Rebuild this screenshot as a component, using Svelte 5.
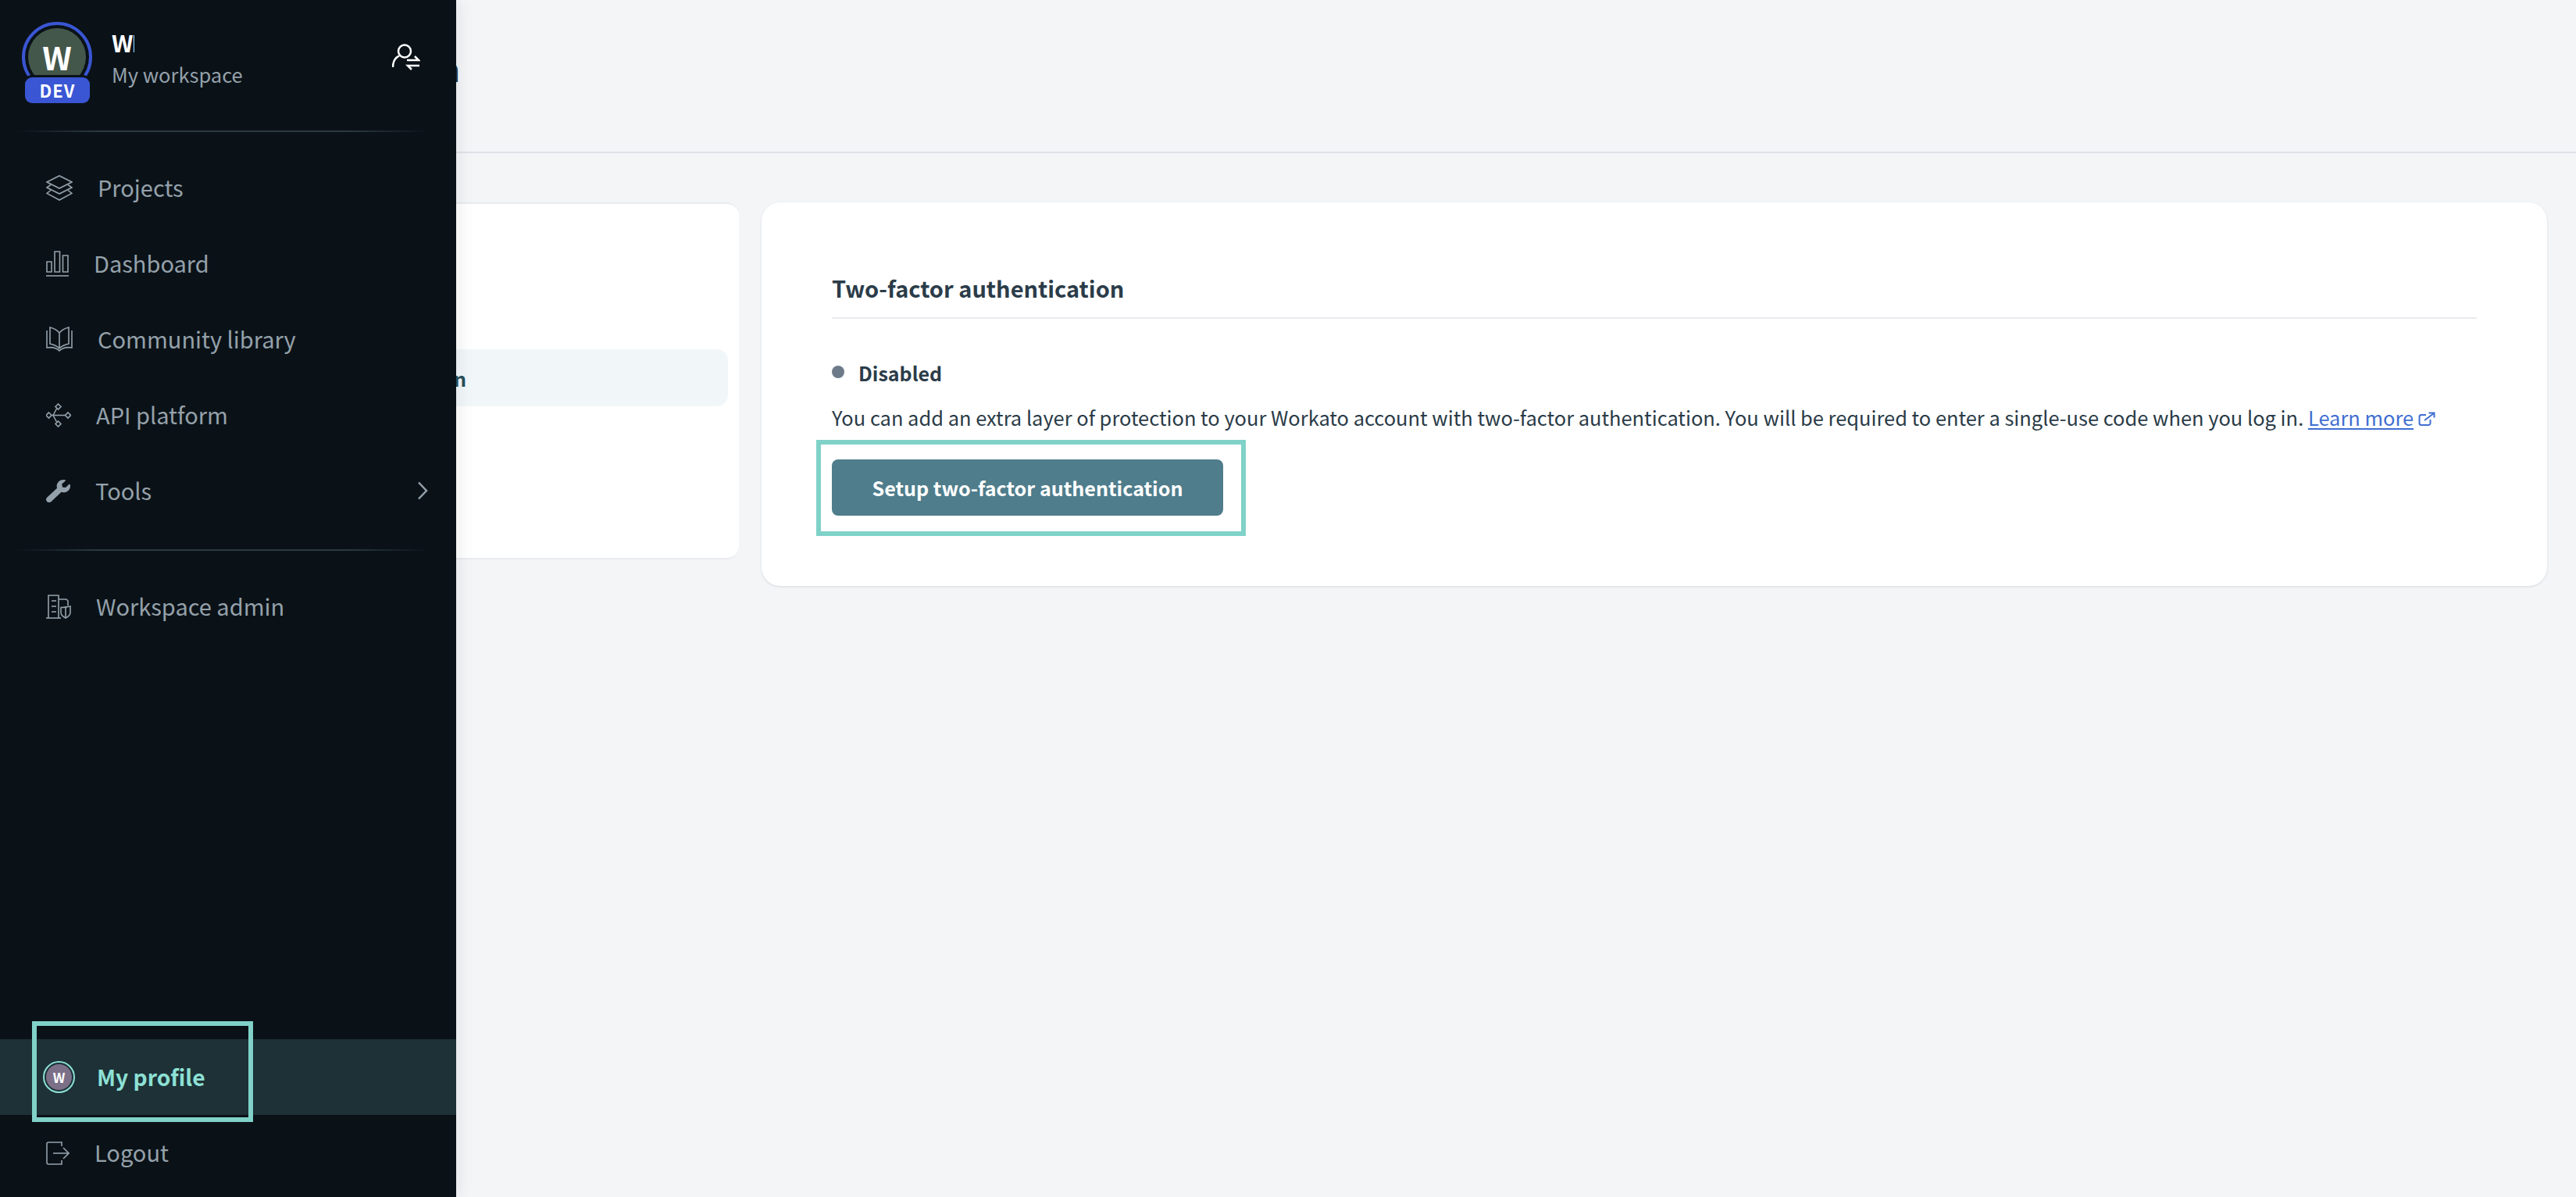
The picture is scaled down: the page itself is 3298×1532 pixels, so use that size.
<script>
  const icons = {
    projects: { w: 34, h: 33, paths: ['M1 9 17 1l16 8-16 8z', 'M6 12.5 1 16l16 8 16-8-5-3.500', 'M6 19.500 1 23.500l16 8.500 16-8.500-5-4'] },
    dashboard: { w: 29, h: 33, paths: ['M1 14h6v13H1z', 'M11 1h6.500v26H11z', 'M21.500 6H28v21h-6.500z', 'M0 32h29'] },
    library: { w: 34, h: 32, paths: ['M1 5v22c6-1 12 0 16 4 4-4 10-5 16-4V5', 'M17 8C14 4.500 9 2 5 1v21c5 1 9 3 12 6 3-3 7-5 12-6V1C25 2 20 4.500 17 8v20'] },
    api: { w: 32, h: 31, paths: ['M3.500 12 7 15.500 3.500 19 0 15.500z', 'M28 12l3.500 3.500L28 19l-3.500-3.500z', 'M15.500 1 19 4.500 15.500 8 12 4.500z', 'M15.500 23 19 26.500 15.500 30 12 26.500z', 'M7 15.500h17.500', 'M9 15.500 13.500 7', 'M9 15.500 13.500 24'] },
    tools: { w: 31, h: 29, fill: true, view: '0 0 512 512', paths: ['M507.730 109.100c-2.240-9.030-13.540-12.090-20.120-5.510l-74.360 74.360-67.880-11.310-11.310-67.880 74.360-74.360c6.620-6.620 3.430-17.900-5.660-20.160-47.380-11.740-99.550.91-136.580 37.930-39.640 39.640-50.550 97.100-34.050 147.200L18.740 402.760c-24.990 24.990-24.990 65.510 0 90.500 24.990 24.990 65.510 24.990 90.500 0l213.210-213.210c50.120 16.710 107.470 5.680 147.370-34.220 37.070-37.070 49.700-89.320 37.910-136.730z'] },
    admin: { w: 32, h: 31, paths: ['M3 30V1h13v29', 'M0 30h19', 'M7 8h6', 'M7 15h6', 'M7 22h6', 'M16 6h10l2 2v6', 'M19 16.500c4 0 8-1 12-1.500v8c0 4-6 7-6 7s-6-3-6-7z', 'M25 15.500V30'] },
    logout: { w: 30, h: 30, paths: ['M20 6V1H3a2 2 0 0 0-2 2v24a2 2 0 0 0 2 2h17v-5', 'M9 15h19', 'M22 8l7 7-7 7'] }
  }

  const navItems = [
    { label: 'Projects', icon: 'projects' },
    { label: 'Dashboard', icon: 'dashboard' },
    { label: 'Community library', icon: 'library' },
    { label: 'API platform', icon: 'api' },
    { label: 'Tools', icon: 'tools', more: true }
  ]
</script>

{#snippet navIcon(name)}
  {@const icon = icons[name]}
  <svg
    class="nav-icon"
    class:filled={icon.fill}
    width={icon.w}
    height={icon.h}
    viewBox={icon.view ?? `0 0 ${icon.w} ${icon.h}`}
    preserveAspectRatio="none"
  >
    {#each icon.paths as d}
      <path {d} />
    {/each}
  </svg>
{/snippet}

<div class="page">
  <main class="main">
    <header class="page-header">
      <h1 class="page-title">Authentication</h1>
    </header>

    <div class="content">
      <aside class="side-card">
        <div class="side-item">Two-factor authentication</div>
      </aside>

      <section class="card">
        <h2 class="card-title">Two-factor authentication</h2>
        <div class="status"><span class="dot"></span>Disabled</div>
        <p class="desc">
          You can add an extra layer of protection to your Workato account with two-factor authentication. You will be required to enter a single-use code when you log in.
          <a href="#learn" class="link">Learn more</a>
          <svg class="ext" width="22" height="18" viewBox="0 0 22 18">
            <path d="M10 4H4a2.500 2.500 0 0 0-2.500 2.500v8A2.500 2.500 0 0 0 4 17h9a2.500 2.500 0 0 0 2.500-2.500V10" />
            <path d="M8 11 20 2" />
            <path d="M13.500 1.500h7v6" />
          </svg>
        </p>
        <div class="action">
          <button class="primary">Setup two-factor authentication</button>
          <span class="callout button-callout"></span>
        </div>
      </section>
    </div>
  </main>

  <nav class="sidebar">
    <div class="account">
      <div class="avatar">
        <span class="avatar-letter">W</span>
        <span class="env">DEV</span>
      </div>
      <div class="account-text">
        <div class="account-name">WI</div>
        <div class="account-sub">My workspace</div>
      </div>
      <svg class="switch" width="36" height="36" viewBox="0 0 36 36">
        <circle cx="16" cy="10.500" r="8" />
        <path d="M1 31c0-7 3-12 8-14.500" />
        <path d="M19 22h15l-5-5" />
        <path d="M35 29H20l5 5" />
      </svg>
    </div>

    <div class="divider"></div>

    <ul class="nav-list">
      {#each navItems as item}
        <li class="nav-row">
          {@render navIcon(item.icon)}
          <span class="nav-label">{item.label}</span>
          {#if item.more}
            <svg class="chevron" width="14" height="24" viewBox="0 0 14 24">
              <path d="M2 1.500 12 12 2 22.500" />
            </svg>
          {/if}
        </li>
      {/each}
    </ul>

    <div class="divider"></div>

    <ul class="nav-list">
      <li class="nav-row">
        {@render navIcon('admin')}
        <span class="nav-label">Workspace admin</span>
      </li>
    </ul>

    <ul class="nav-list bottom">
      <li class="nav-row active">
        <span class="me">W</span>
        <span class="nav-label">My profile</span>
        <span class="callout profile-callout"></span>
      </li>
      <li class="nav-row">
        {@render navIcon('logout')}
        <span class="nav-label">Logout</span>
      </li>
    </ul>
  </nav>
</div>

<style>
  :global(body) {
    margin: 0;
    background: #f3f5f7;
    font-family: "Noto Sans CJK SC", "Noto Sans", sans-serif;
  }

  .page {
    position: relative;
    height: 100vh;
    overflow: hidden;
  }

  .main {
    min-height: 100%;
  }

  .page-header {
    height: 194px;
    border-bottom: 2px solid #dfe2e6;
    display: flex;
    align-items: flex-start;
  }

  .page-title {
    margin: 58px 0 0;
    width: 589px;
    text-align: right;
    font-size: 40px;
    font-weight: 700;
    line-height: 60px;
    color: #24343f;
  }

  .content {
    display: grid;
    grid-template-columns: 766px minmax(0, 1fr);
    column-gap: 29px;
    align-items: start;
    padding: 63px 37px 0 180px;
  }

  .side-card {
    box-sizing: border-box;
    height: 457px;
    padding: 186px 14px 0;
    background: #fff;
    border-top: 2px solid #e9ebee;
    border-bottom: 2px solid #e9ebee;
    border-radius: 16px;
  }

  .side-item {
    box-sizing: border-box;
    height: 73px;
    padding-left: 74px;
    line-height: 73px;
    font-size: 25.500px;
    font-weight: 600;
    color: #264f5a;
    background: #f1f7f9;
    border-radius: 14px;
  }

  .card {
    box-sizing: border-box;
    height: 491px;
    padding: 80px 90px 0;
    background: #fff;
    border-radius: 24px;
    box-shadow: 0 1px 3px rgba(40, 55, 70, 0.14);
  }

  .card-title {
    margin: 0;
    height: 67px;
    border-bottom: 2px solid #e9ebee;
    font-size: 29px;
    font-weight: 600;
    line-height: 58px;
    color: #2b3c49;
  }

  .status {
    display: flex;
    align-items: center;
    gap: 18px;
    margin-top: 49px;
    font-size: 25px;
    font-weight: 600;
    line-height: 40px;
    color: #2b3c49;
  }

  .dot {
    width: 16px;
    height: 16px;
    margin-top: -2px;
    border-radius: 50%;
    background: #6c7a89;
  }

  .desc {
    margin: 17px 0 0;
    font-size: 25.450px;
    line-height: 40px;
    color: #2a3b47;
    white-space: nowrap;
  }

  .link {
    color: #3f6ed1;
    text-decoration: underline;
    text-underline-offset: 3px;
  }

  .ext {
    fill: none;
    stroke: #3f6ed1;
    stroke-width: 2;
  }

  .action {
    position: relative;
    margin-top: 34px;
    width: 501px;
  }

  .primary {
    display: block;
    width: 501px;
    height: 72px;
    border: 0;
    border-radius: 8px;
    background: #4f7d8c;
    color: #fff;
    font-family: inherit;
    font-size: 25.100px;
    font-weight: 600;
  }

  .callout {
    position: absolute;
    box-sizing: border-box;
    border: 6px solid #80d2c8;
    pointer-events: none;
  }

  .button-callout {
    left: -20px;
    top: -25px;
    width: 550px;
    height: 123px;
  }

  .profile-callout {
    left: 41px;
    top: -23px;
    width: 283px;
    height: 129px;
  }

  .sidebar {
    position: absolute;
    top: 0;
    left: 0;
    bottom: 0;
    width: 584px;
    display: flex;
    flex-direction: column;
    background: #0a1218;
    box-shadow: 4px 0 18px rgba(20, 30, 40, 0.08);
  }

  .account {
    box-sizing: border-box;
    height: 167px;
    padding: 28px 46px 0 28px;
    display: flex;
    align-items: flex-start;
  }

  .avatar {
    position: relative;
    box-sizing: border-box;
    width: 90px;
    height: 90px;
    flex: none;
    display: flex;
    align-items: center;
    justify-content: center;
    border: 4px solid #3a56d4;
    border-radius: 50%;
    background: #43574a;
    background-clip: content-box;
    padding: 4px;
  }

  .avatar-letter {
    margin-top: -1px;
    font-size: 41px;
    font-weight: 700;
    line-height: 1;
    color: #fff;
  }

  .env {
    position: absolute;
    left: 0;
    top: 67px;
    width: 83px;
    height: 33px;
    border-radius: 9px;
    background: #3a56d4;
    box-shadow: 0 0 0 3px #0a1218;
    text-align: center;
    font-size: 22px;
    font-weight: 700;
    line-height: 33px;
    letter-spacing: 1px;
    color: #fff;
  }

  .account-text {
    margin-left: 25px;
  }

  .account-name {
    width: 29px;
    margin-top: 4px;
    overflow: hidden;
    font-size: 30px;
    font-weight: 700;
    line-height: 44px;
    letter-spacing: -2px;
    color: #fff;
    white-space: nowrap;
  }

  .account-sub {
    font-size: 25.500px;
    line-height: 38px;
    color: #95a1aa;
  }

  .switch {
    margin: 27px 0 0 auto;
    fill: none;
    stroke: #fff;
    stroke-width: 2.500;
  }

  .divider {
    flex: none;
    height: 2px;
    margin: 0 34px 0 20px;
    background: linear-gradient(90deg, transparent, #2b3a40 20%, #2b3a40 80%, transparent);
  }

  .nav-list {
    margin: 0;
    padding: 22.500px 0 26.500px;
    list-style: none;
  }

  .nav-list.bottom {
    margin-top: auto;
    padding: 0 0 8px;
  }

  .nav-row {
    position: relative;
    box-sizing: border-box;
    height: 97px;
    padding: 0 36px 0 59px;
    display: flex;
    align-items: center;
    gap: 32px;
    font-size: 29px;
    color: #95a1aa;
  }

  .nav-label {
    padding-bottom: 3px;
  }

  .nav-row.active {
    background: #1d3137;
    color: #8de0d5;
    font-size: 28.200px;
    font-weight: 600;
  }

  .nav-icon {
    flex: none;
    fill: none;
    stroke: #95a1aa;
    stroke-width: 1.600;
  }

  .nav-icon.filled {
    fill: #95a1aa;
    stroke: none;
  }

  .chevron {
    margin-left: auto;
    fill: none;
    stroke: #95a1aa;
    stroke-width: 2.500;
  }

  .me {
    box-sizing: border-box;
    width: 41px;
    height: 41px;
    margin: 0 -4px 0 -4px;
    flex: none;
    display: flex;
    align-items: center;
    justify-content: center;
    border: 2px solid #8de0d5;
    border-radius: 50%;
    padding: 2px;
    background: #7c7089;
    background-clip: content-box;
    font-size: 17px;
    font-weight: 700;
    color: #fff;
  }
</style>
